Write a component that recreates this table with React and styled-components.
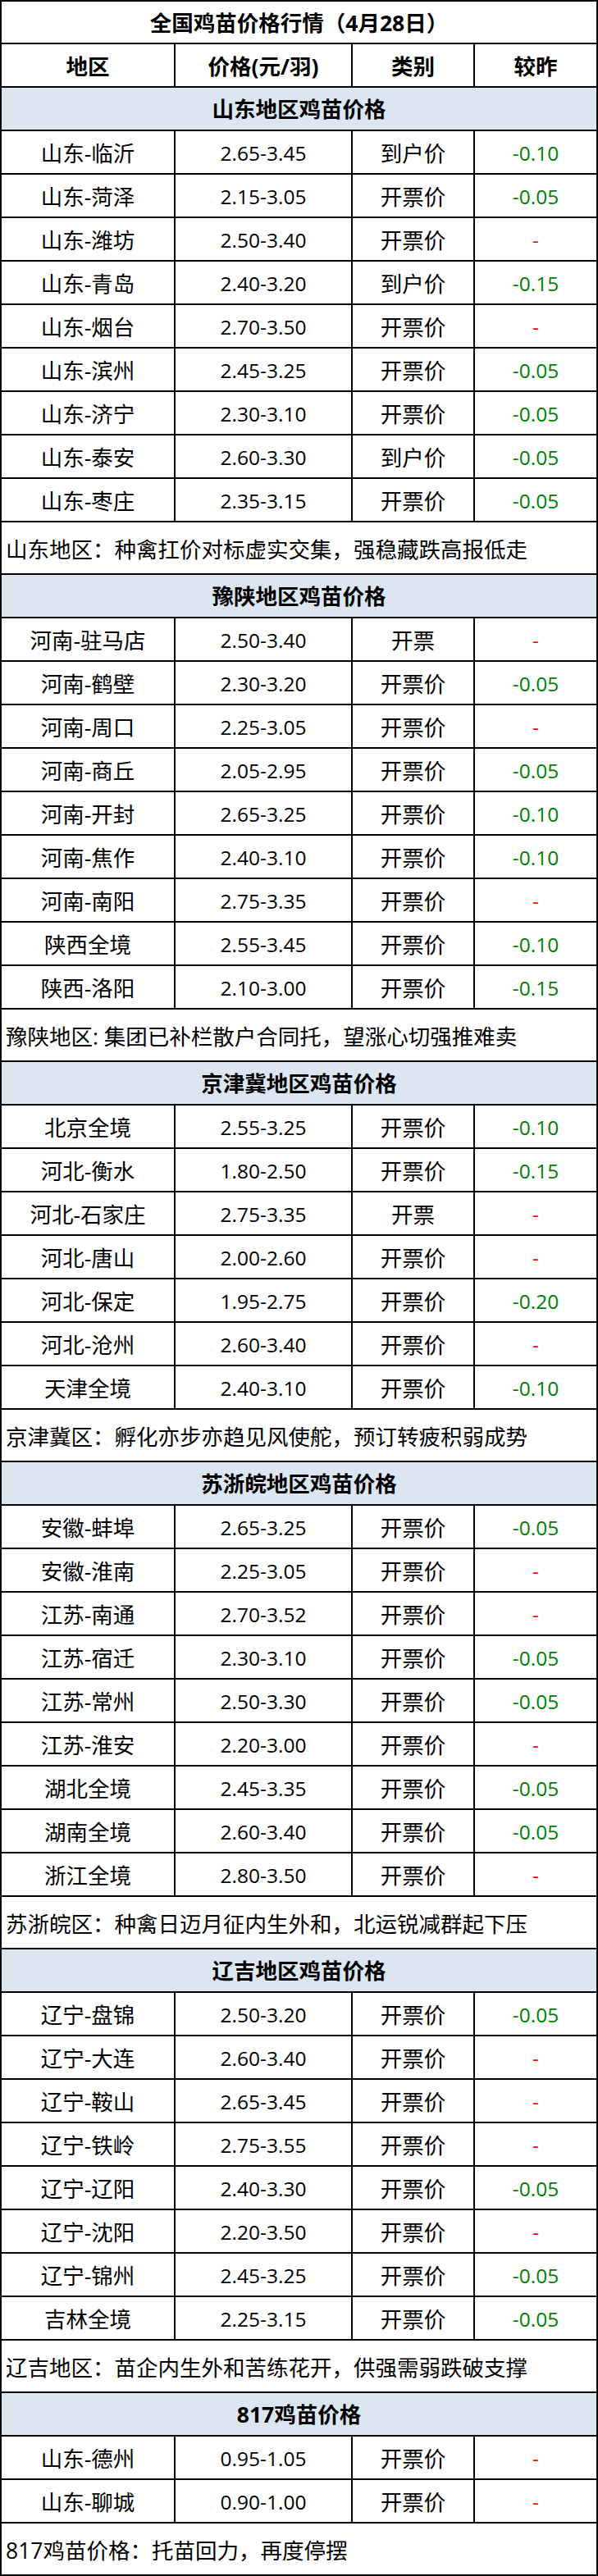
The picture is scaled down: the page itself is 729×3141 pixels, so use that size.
import React from "react"
import styled, { createGlobalStyle } from "styled-components"

const GlobalStyle = createGlobalStyle`
  body {
    margin: 0;
    background: #fff;
    font-family: "Open Sans", "Noto Sans CJK SC", sans-serif;
    color: #000;
  }
`

const sections = [
  {
    name: "山东地区鸡苗价格",
    rows: [
      ["山东-临沂", "2.65-3.45", "到户价", "-0.10"],
      ["山东-菏泽", "2.15-3.05", "开票价", "-0.05"],
      ["山东-潍坊", "2.50-3.40", "开票价", "-"],
      ["山东-青岛", "2.40-3.20", "到户价", "-0.15"],
      ["山东-烟台", "2.70-3.50", "开票价", "-"],
      ["山东-滨州", "2.45-3.25", "开票价", "-0.05"],
      ["山东-济宁", "2.30-3.10", "开票价", "-0.05"],
      ["山东-泰安", "2.60-3.30", "到户价", "-0.05"],
      ["山东-枣庄", "2.35-3.15", "开票价", "-0.05"],
    ],
    note: "山东地区：种禽扛价对标虚实交集，强稳藏跌高报低走",
  },
  {
    name: "豫陕地区鸡苗价格",
    rows: [
      ["河南-驻马店", "2.50-3.40", "开票", "-"],
      ["河南-鹤壁", "2.30-3.20", "开票价", "-0.05"],
      ["河南-周口", "2.25-3.05", "开票价", "-"],
      ["河南-商丘", "2.05-2.95", "开票价", "-0.05"],
      ["河南-开封", "2.65-3.25", "开票价", "-0.10"],
      ["河南-焦作", "2.40-3.10", "开票价", "-0.10"],
      ["河南-南阳", "2.75-3.35", "开票价", "-"],
      ["陕西全境", "2.55-3.45", "开票价", "-0.10"],
      ["陕西-洛阳", "2.10-3.00", "开票价", "-0.15"],
    ],
    note: "豫陕地区: 集团已补栏散户合同托，望涨心切强推难卖",
  },
  {
    name: "京津冀地区鸡苗价格",
    rows: [
      ["北京全境", "2.55-3.25", "开票价", "-0.10"],
      ["河北-衡水", "1.80-2.50", "开票价", "-0.15"],
      ["河北-石家庄", "2.75-3.35", "开票", "-"],
      ["河北-唐山", "2.00-2.60", "开票价", "-"],
      ["河北-保定", "1.95-2.75", "开票价", "-0.20"],
      ["河北-沧州", "2.60-3.40", "开票价", "-"],
      ["天津全境", "2.40-3.10", "开票价", "-0.10"],
    ],
    note: "京津冀区：孵化亦步亦趋见风使舵，预订转疲积弱成势",
  },
  {
    name: "苏浙皖地区鸡苗价格",
    rows: [
      ["安徽-蚌埠", "2.65-3.25", "开票价", "-0.05"],
      ["安徽-淮南", "2.25-3.05", "开票价", "-"],
      ["江苏-南通", "2.70-3.52", "开票价", "-"],
      ["江苏-宿迁", "2.30-3.10", "开票价", "-0.05"],
      ["江苏-常州", "2.50-3.30", "开票价", "-0.05"],
      ["江苏-淮安", "2.20-3.00", "开票价", "-"],
      ["湖北全境", "2.45-3.35", "开票价", "-0.05"],
      ["湖南全境", "2.60-3.40", "开票价", "-0.05"],
      ["浙江全境", "2.80-3.50", "开票价", "-"],
    ],
    note: "苏浙皖区：种禽日迈月征内生外和，北运锐减群起下压",
  },
  {
    name: "辽吉地区鸡苗价格",
    rows: [
      ["辽宁-盘锦", "2.50-3.20", "开票价", "-0.05"],
      ["辽宁-大连", "2.60-3.40", "开票价", "-"],
      ["辽宁-鞍山", "2.65-3.45", "开票价", "-"],
      ["辽宁-铁岭", "2.75-3.55", "开票价", "-"],
      ["辽宁-辽阳", "2.40-3.30", "开票价", "-0.05"],
      ["辽宁-沈阳", "2.20-3.50", "开票价", "-"],
      ["辽宁-锦州", "2.45-3.25", "开票价", "-0.05"],
      ["吉林全境", "2.25-3.15", "开票价", "-0.05"],
    ],
    note: "辽吉地区：苗企内生外和苦练花开，供强需弱跌破支撑",
  },
  {
    name: "817鸡苗价格",
    rows: [
      ["山东-德州", "0.95-1.05", "开票价", "-"],
      ["山东-聊城", "0.90-1.00", "开票价", "-"],
    ],
    note: "817鸡苗价格：托苗回力，再度停摆",
  },
]

export default function App() {
  return (
    <>
      <GlobalStyle />
      <Sheet>
        <TitleRow>全国鸡苗价格行情（4月28日）</TitleRow>
        <Row $height={53}>
          <HeadCell>地区</HeadCell>
          <HeadCell>价格(元/羽)</HeadCell>
          <HeadCell>类别</HeadCell>
          <HeadCell>较昨</HeadCell>
        </Row>
        {sections.map((s) => (
          <React.Fragment key={s.name}>
            <SectionRow>{s.name}</SectionRow>
            {s.rows.map(([area, price, kind, diff]) => (
              <Row key={area} $height={53}>
                <Cell>{area}</Cell>
                <NumCell>{price}</NumCell>
                <Cell>{kind}</Cell>
                <DiffCell $flat={diff === "-"}>{diff}</DiffCell>
              </Row>
            ))}
            <NoteRow>{s.note}</NoteRow>
          </React.Fragment>
        ))}
      </Sheet>
    </>
  )
}

const Sheet = styled.div`
  width: 729px;
  box-sizing: border-box;
  border: 2px solid #000;
  border-bottom: 0;
`

const Row = styled.div`
  display: grid;
  grid-template-columns: 212px 216px 149px 1fr;
  height: ${(p) => p.$height}px;
  box-sizing: border-box;
  border-bottom: 2px solid #000;
`

const Cell = styled.div`
  display: flex;
  align-items: center;
  justify-content: center;
  padding-top: 3px;
  box-sizing: border-box;
  border-right: 2px solid #000;
  font-size: 26.5px;
  line-height: 1;
  white-space: nowrap;

  &:last-child {
    border-right: 0;
  }
`

const HeadCell = styled(Cell)`
  font-weight: 700;
`

const NumCell = styled(Cell)`
  font-size: 24.5px;
`

const DiffCell = styled(NumCell)`
  color: ${(p) => (p.$flat ? "#ff0000" : "#008000")};
`

const TitleRow = styled.div`
  display: flex;
  align-items: center;
  justify-content: center;
  height: 52px;
  padding-top: 2px;
  box-sizing: border-box;
  border-bottom: 2px solid #000;
  font-size: 26.5px;
  font-weight: 700;
  line-height: 1;
`

const SectionRow = styled(TitleRow)`
  height: 53px;
  background: #dce6f1;
`

const NoteRow = styled.div`
  display: flex;
  align-items: center;
  height: 64px;
  padding: 4px 0 0 5px;
  box-sizing: border-box;
  border-bottom: 2px solid #000;
  font-size: 26.5px;
  line-height: 1;
  white-space: nowrap;
`
